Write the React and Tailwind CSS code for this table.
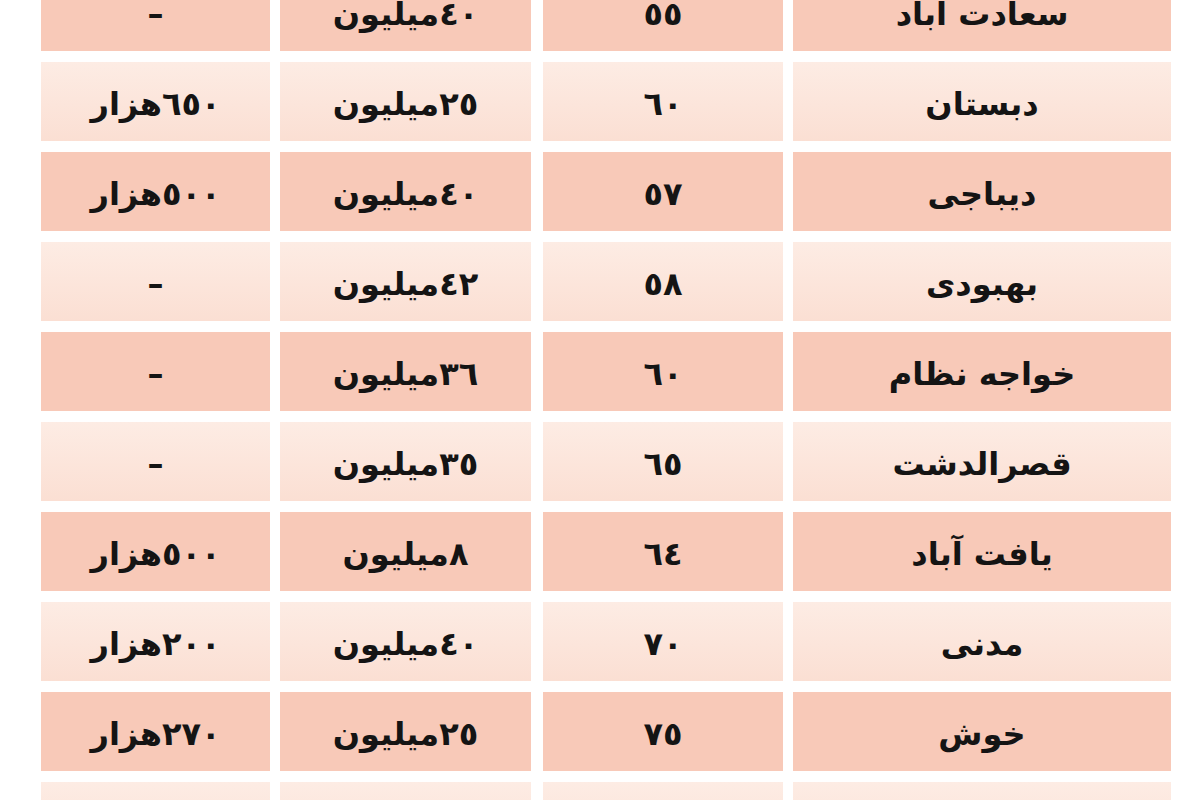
const rows = [
  { name: "سعادت آباد", area: "٥٥", price: "٤٠میلیون", rent: "–", dark: true },
  { name: "دبستان", area: "٦٠", price: "٢٥میلیون", rent: "٦٥٠هزار", dark: false },
  { name: "دیباجی", area: "٥٧", price: "٤٠میلیون", rent: "٥٠٠هزار", dark: true },
  { name: "بهبودی", area: "٥٨", price: "٤٢میلیون", rent: "–", dark: false },
  { name: "خواجه نظام", area: "٦٠", price: "٣٦میلیون", rent: "–", dark: true },
  { name: "قصرالدشت", area: "٦٥", price: "٣٥میلیون", rent: "–", dark: false },
  { name: "یافت آباد", area: "٦٤", price: "٨میلیون", rent: "٥٠٠هزار", dark: true },
  { name: "مدنی", area: "٧٠", price: "٤٠میلیون", rent: "٢٠٠هزار", dark: false },
  { name: "خوش", area: "٧٥", price: "٢٥میلیون", rent: "٢٧٠هزار", dark: true },
  { name: "آجودانیه", area: "٨٠", price: "٣٠میلیون", rent: "–", dark: false },
];

const Cell = ({ children, dark, className }) => (
  <div
    dir="rtl"
    className={
      "h-[79px] pt-[4px] flex items-center justify-center text-[32px] font-bold text-[#141414] " +
      (dark ? "bg-[#f8c9b8] " : "bg-gradient-to-b from-[#fdece4] to-[#fbdfd3] ") +
      className
    }
  >
    {children}
  </div>
);

export default function App() {
  return (
    <div
      className="w-[1200px] h-[800px] overflow-hidden bg-white"
      style={{ fontFamily: '"DejaVu Sans", "Noto Sans", sans-serif' }}
    >
      <div className="-mt-[28px] pl-[41px] flex flex-col gap-[11px]">
        {rows.map((r, i) => (
          <div key={i} className="flex">
            <Cell dark={r.dark} className="w-[229px]">{r.rent}</Cell>
            <Cell dark={r.dark} className="w-[251px] ml-[10px]">{r.price}</Cell>
            <Cell dark={r.dark} className="w-[240px] ml-[12px]">{r.area}</Cell>
            <Cell dark={r.dark} className="w-[378px] ml-[10px]">{r.name}</Cell>
          </div>
        ))}
      </div>
    </div>
  );
}
